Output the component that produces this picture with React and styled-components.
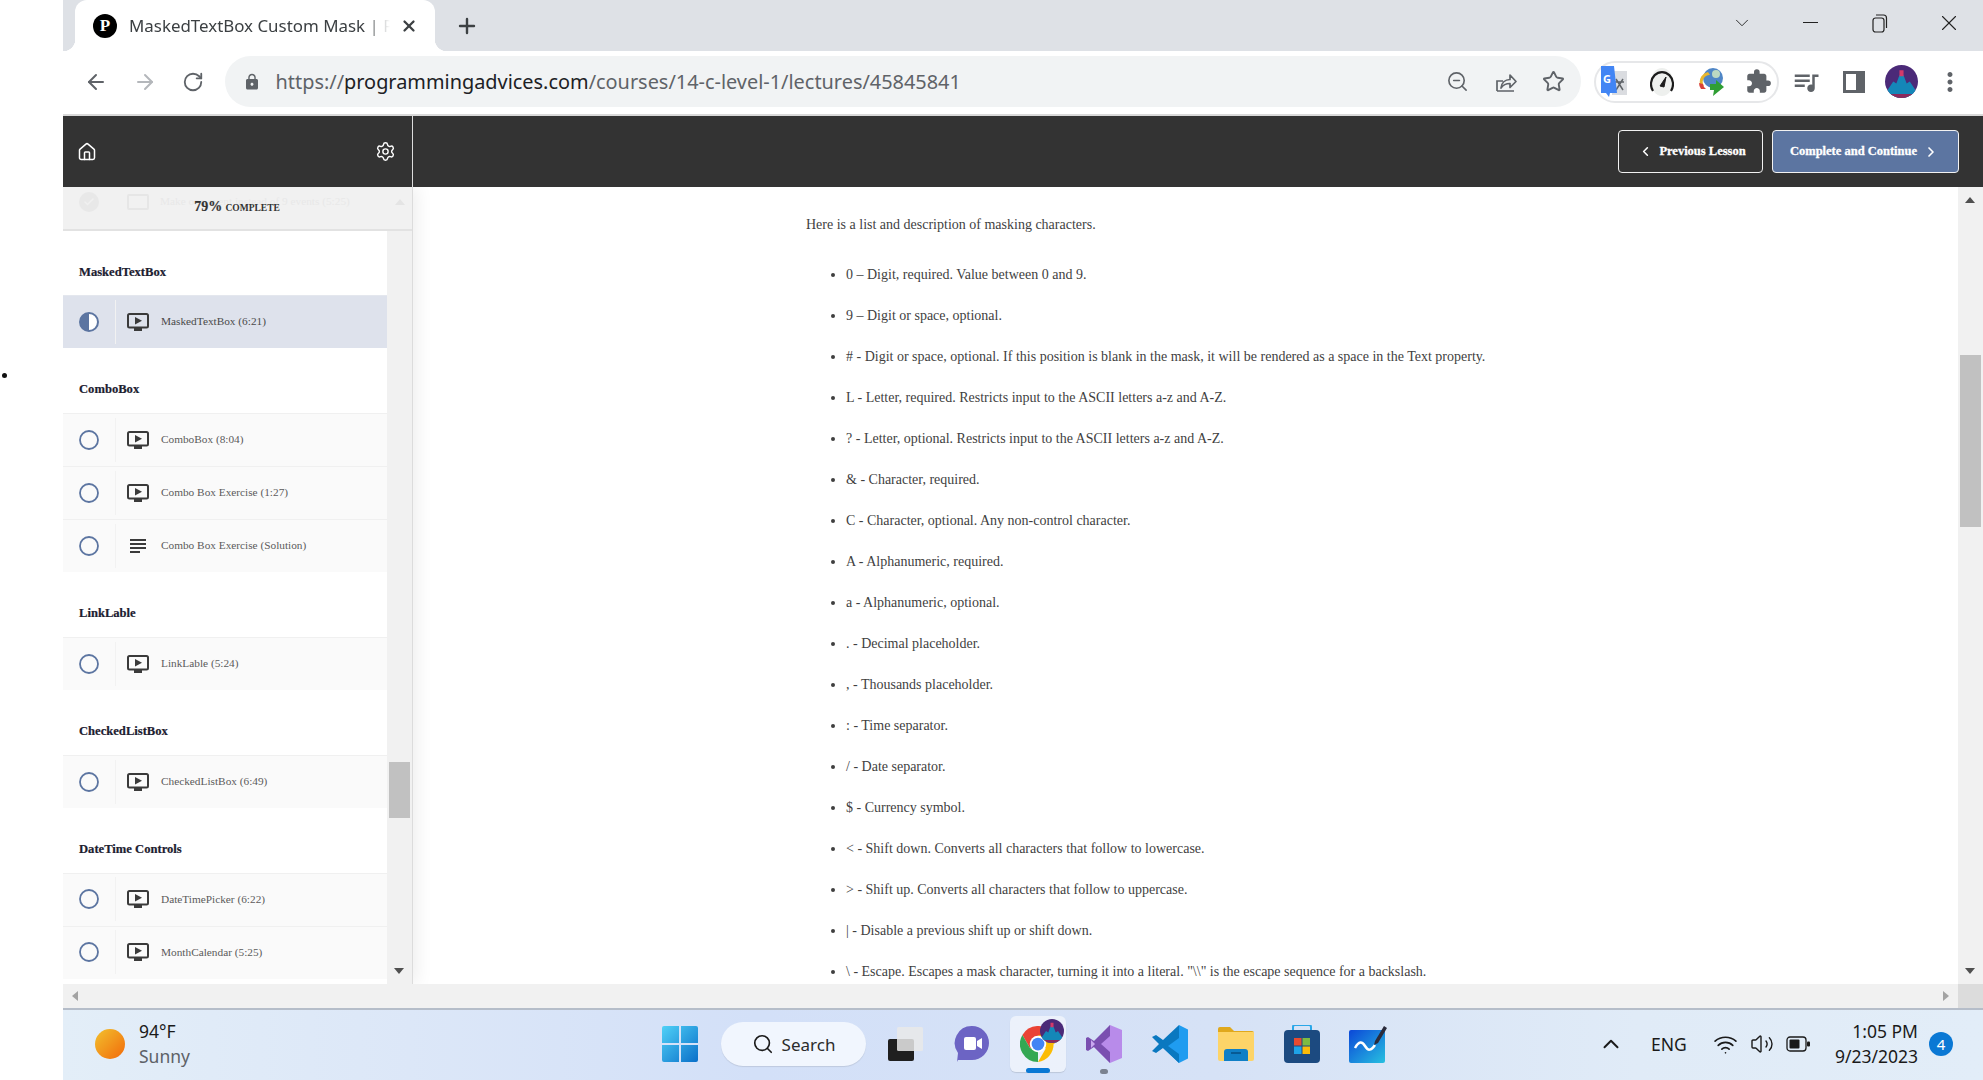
import React from 'react';
import styled, { createGlobalStyle } from 'styled-components';
import {
  ArrowLeft,
  ArrowRight,
  RotateCw,
  ZoomOut,
  Star,
  X,
  Plus,
  ChevronDown,
  ChevronUp,
  ChevronLeft,
  ChevronRight,
  House,
  Settings,
  Search,
  Wifi,
  Volume2,
  Check,
} from 'lucide-react';
import { MdLock, MdExtension, MdQueueMusic, MdMoreVert } from 'react-icons/md';

const SERIF = '"Liberation Serif", "Times New Roman", serif';
const UI = '"Noto Sans", "Open Sans", sans-serif';

const sections = [
  { title: 'MaskedTextBox', rows: [{ label: 'MaskedTextBox (6:21)', active: true }] },
  {
    title: 'ComboBox',
    rows: [
      { label: 'ComboBox (8:04)' },
      { label: 'Combo Box Exercise (1:27)' },
      { label: 'Combo Box Exercise (Solution)', text: true },
    ],
  },
  { title: 'LinkLable', rows: [{ label: 'LinkLable (5:24)' }] },
  { title: 'CheckedListBox', rows: [{ label: 'CheckedListBox (6:49)' }] },
  {
    title: 'DateTime Controls',
    rows: [{ label: 'DateTimePicker (6:22)' }, { label: 'MonthCalendar (5:25)' }],
  },
];

const maskChars = [
  '0 – Digit, required. Value between 0 and 9.',
  '9 – Digit or space, optional.',
  '# - Digit or space, optional. If this position is blank in the mask, it will be rendered as a space in the Text property.',
  'L - Letter, required. Restricts input to the ASCII letters a-z and A-Z.',
  '? - Letter, optional. Restricts input to the ASCII letters a-z and A-Z.',
  '& - Character, required.',
  'C - Character, optional. Any non-control character.',
  'A - Alphanumeric, required.',
  'a - Alphanumeric, optional.',
  '. - Decimal placeholder.',
  ', - Thousands placeholder.',
  ': - Time separator.',
  '/ - Date separator.',
  '$ - Currency symbol.',
  '< - Shift down. Converts all characters that follow to lowercase.',
  '> - Shift up. Converts all characters that follow to uppercase.',
  '| - Disable a previous shift up or shift down.',
  '\\ - Escape. Escapes a mask character, turning it into a literal. "\\\\" is the escape sequence for a backslash.',
];

//Small drawings
const TvIcon = () => (
  <svg width="22" height="18" viewBox="0 0 22 18">
    <rect x="1" y="1" width="20" height="13.5" rx="1.5" fill="none" stroke="#3a3a3a" strokeWidth="2" />
    <path d="M8 4 L15 7.8 L8 11.5 Z" fill="#3a3a3a" />
    <rect x="7" y="15" width="8" height="3" fill="#3a3a3a" />
  </svg>
);

const TextIcon = () => (
  <svg width="22" height="18" viewBox="0 0 22 18">
    <path d="M3 3h16M3 7h16M3 11h16M3 15h10" stroke="#3a3a3a" strokeWidth="1.8" />
  </svg>
);

const HalfCircle = () => (
  <svg width="20" height="20" viewBox="0 0 20 20">
    <circle cx="10" cy="10" r="9" fill="#fff" stroke="#5c75a1" strokeWidth="2" />
    <path d="M10 1 A9 9 0 0 0 10 19 Z" fill="#5c75a1" />
  </svg>
);

const EmptyCircle = () => (
  <svg width="20" height="20" viewBox="0 0 20 20">
    <circle cx="10" cy="10" r="9" fill="none" stroke="#5c75a1" strokeWidth="1.8" />
  </svg>
);

const ShareIcon = () => (
  <svg width="24" height="24" viewBox="0 0 24 24" fill="none" stroke="#5f6368" strokeWidth="1.7">
    <path d="M3 21h17M3 21V11h6" />
    <path d="M7 18c.5-5 4-8.500 9-8.500V5l6 6.500-6 6V13.500c-4 0-7 1.500-9 4.500Z" strokeLinejoin="round" />
  </svg>
);

const SidePanelIcon = () => (
  <svg width="22" height="22" viewBox="0 0 22 22">
    <path d="M0 0h22v22H0Z M3 3v16h10V3Z" fill="#5f6368" fillRule="evenodd" />
  </svg>
);

const RestoreIcon = () => (
  <svg width="16" height="20" viewBox="0 0 16 20" fill="none" stroke="#222" strokeWidth="1.2">
    <rect x="1" y="5" width="11" height="14" rx="2.500" />
    <path d="M4 2h7.500A3 3 0 0 1 14.500 5v10" />
  </svg>
);

const TranslateIcon = () => (
  <svg width="26" height="32" viewBox="0 0 26 32">
    <rect x="11" y="5" width="15" height="24" fill="#dadce0" />
    <path d="M15 13l7 11M22 13l-7 11M14 16h9" stroke="#5f6368" strokeWidth="1.500" />
    <path d="M0 0h13l3 27h-7l-1 4-3-4H0Z" fill="#4285f4" />
    <text x="6" y="17" fontFamily={UI} fontSize="11" fontWeight="700" fill="#fff" textAnchor="middle">G</text>
  </svg>
);

const SpeedIcon = () => (
  <svg width="24" height="30" viewBox="0 0 24 30">
    <ellipse cx="12" cy="15" rx="11" ry="14" fill="#eef0ee" />
    <path d="M3 24A11 12 0 1 1 21 24" fill="none" stroke="#1c1c1c" strokeWidth="2.200" />
    <path d="M10 19l6-9-2 10Z" fill="#1c1c1c" stroke="#1c1c1c" />
  </svg>
);

const IdmIcon = () => (
  <svg width="26" height="32" viewBox="0 0 26 32">
    <circle cx="15" cy="12" r="10" fill="#4f86c6" />
    <circle cx="18" cy="8" r="4" fill="#bcd9c2" />
    <path d="M2 18A10 10 0 0 1 10 6l2 3a7 7 0 0 0-6 11Z" fill="#e8b62d" />
    <path d="M3 23A10 10 0 0 1 1 17l4 1a7 7 0 0 0 3 5Z" fill="#d9413a" />
    <path d="M12 18h6v-4l8 7-11 9 1-6h-4Z" fill="#2f9e34" />
  </svg>
);

const AvatarArt = ({ size }) => (
  <svg width={size} height={size} viewBox="0 0 32 32">
    <clipPath id={`avatarClip${size}`}>
      <circle cx="16" cy="16" r="16" />
    </clipPath>
    <g clipPath={`url(#avatarClip${size})`}>
      <rect width="32" height="32" fill="#4b2a78" />
      <path d="M2 25L8 16l3 2 3-8h4l3 8 3-2 6 9v7H2Z" fill="#1487b8" />
      <path d="M14 5h4v6h-4Z" fill="#d43a6a" />
      <path d="M0 28h32v4H0Z" fill="#8c2a5c" />
    </g>
  </svg>
);

const WindowsLogo = () => (
  <svg width="36" height="36" viewBox="0 0 36 36">
    <defs>
      <linearGradient id="winBlue" x1="0" y1="0" x2="1" y2="1">
        <stop offset="0" stopColor="#4fd1f7" />
        <stop offset="1" stopColor="#0a6fc9" />
      </linearGradient>
    </defs>
    <path d="M0 2a2 2 0 0 1 2-2h15v17H0ZM19 0h15a2 2 0 0 1 2 2v15H19ZM0 19h17v17H2a2 2 0 0 1-2-2ZM19 19h17v15a2 2 0 0 1-2 2H19Z" fill="url(#winBlue)" />
  </svg>
);

const TaskViewIcon = () => (
  <svg width="38" height="36" viewBox="0 0 38 36">
    <rect x="1" y="13" width="26" height="22" rx="2" fill="#1f1f1f" />
    <rect x="10" y="1" width="26" height="24" rx="1.500" fill="#e9e9e9" fillOpacity="0.85" />
  </svg>
);

const ChatIcon = () => (
  <svg width="36" height="38" viewBox="0 0 36 38">
    <path d="M18 1a17 17 0 0 1 0 34H4l-1 2 1-9A17 17 0 0 1 18 1Z" fill="#6c64c4" />
    <rect x="10" y="12" width="12" height="13" rx="2" fill="#fff" />
    <path d="M23 16l5-3v11l-5-3Z" fill="#fff" />
  </svg>
);

const ChromeLogo = () => (
  <svg width="36" height="36" viewBox="0 0 48 48">
    <path d="M24 24L44.800 12A24 24 0 0 0 3.200 12L13.600 30Z" fill="#ea4335" />
    <path d="M24 24L13.600 30 3.200 12A24 24 0 0 0 24 48Z" fill="#34a853" />
    <path d="M24 24H44.800A24 24 0 0 1 24 48L34.400 30Z" fill="#fbbc04" />
    <path d="M24 12H44.800A24 24 0 0 1 46 24L34 24Z" fill="#fbbc04" />
    <circle cx="24" cy="24" r="11" fill="#fff" />
    <circle cx="24" cy="24" r="8.500" fill="#4285f4" />
  </svg>
);

const StudioLogo = () => (
  <svg width="36" height="38" viewBox="0 0 36 38">
    <path d="M24 0l12 5v28l-12 5L8 22Z" fill="#b88bea" />
    <path d="M24 0L8 16 2 12 0 13v12l2 1 6-4 16 16V27L15 19l9-8Z" fill="#7a4fb0" />
    <path d="M5 15v8l4-4Z" fill="#c9a8ef" />
  </svg>
);

const CodeLogo = () => (
  <svg width="36" height="38" viewBox="0 0 36 38">
    <path d="M27 0l9 4.500v29L27 38 9 21l18-14Z" fill="#1f9cf0" />
    <path d="M27 0L11 15 4 10 0 12l7 7-7 7 4 2 7-5 16 15 0-9-11-8 11-8Z" fill="#0a78c0" />
  </svg>
);

const FolderLogo = () => (
  <svg width="36" height="34" viewBox="0 0 36 34">
    <path d="M0 2a2 2 0 0 1 2-2h10l4 4h18a2 2 0 0 1 2 2v4H0Z" fill="#e0a81c" />
    <path d="M0 5h36v27a2 2 0 0 1-2 2H2a2 2 0 0 1-2-2Z" fill="#fdd468" />
    <path d="M6 34V25a3 3 0 0 1 3-3h18a3 3 0 0 1 3 3v9Z" fill="#0f7fc6" />
    <rect x="13" y="25" width="10" height="2" fill="#075a94" />
  </svg>
);

const StoreLogo = () => (
  <svg width="36" height="38" viewBox="0 0 36 38">
    <path d="M9 6V2a2 2 0 0 1 2-2h14a2 2 0 0 1 2 2v4" fill="none" stroke="#2aa7e8" strokeWidth="2" />
    <rect x="0" y="5" width="36" height="33" rx="4" fill="#1c4a80" />
    <rect x="10" y="13" width="7.500" height="7.500" fill="#e94b30" />
    <rect x="18.500" y="13" width="7.500" height="7.500" fill="#7dbb42" />
    <rect x="10" y="21.500" width="7.500" height="7.500" fill="#1fa3e8" />
    <rect x="18.500" y="21.500" width="7.500" height="7.500" fill="#fbbc09" />
  </svg>
);

const WhiteboardLogo = () => (
  <svg width="38" height="38" viewBox="0 0 38 38">
    <defs>
      <linearGradient id="boardBlue" x1="0" y1="0" x2="1" y2="1">
        <stop offset="0" stopColor="#0b47d8" />
        <stop offset="1" stopColor="#27c0e0" />
      </linearGradient>
    </defs>
    <rect x="0" y="5" width="36" height="33" rx="2" fill="url(#boardBlue)" />
    <path d="M6 23c4-7 7-7 10-2s6 5 10-1" fill="none" stroke="#fff" strokeWidth="2.500" />
    <path d="M26 16L35 1l3 2-9 15-4 2Z" fill="#2b2b3a" />
  </svg>
);

const BatteryIcon = () => (
  <svg width="24" height="16" viewBox="0 0 24 16">
    <rect x="1" y="1" width="19" height="14" rx="3" fill="none" stroke="#1a1a1a" strokeWidth="1.300" />
    <rect x="3.500" y="3.500" width="10" height="9" rx="1" fill="#1a1a1a" />
    <rect x="21" y="5.500" width="3" height="5" rx="1" fill="#1a1a1a" />
  </svg>
);

const App = () => {
  return (
    <Page>
      <GlobalStyle />
      <LeftStrip>
        <StrayDot />
      </LeftStrip>
      <BrowserWindow>
        <TabStrip>
          <Tab>
            <Favicon>P</Favicon>
            <TabTitle>MaskedTextBox Custom Mask | Programming</TabTitle>
            <X size={18} color="#3c4043" strokeWidth={3} />
          </Tab>
          <NewTab>
            <Plus size={24} color="#3c4043" strokeWidth={2.4} />
          </NewTab>
          <WindowControls>
            <WindowButton $width={68}>
              <ChevronDown size={22} color="#222" strokeWidth={1} />
            </WindowButton>
            <WindowButton $width={69}>
              <MinusLine />
            </WindowButton>
            <WindowButton $width={69}>
              <RestoreIcon />
            </WindowButton>
            <WindowButton $width={69}>
              <X size={26} color="#222" strokeWidth={1} />
            </WindowButton>
          </WindowControls>
        </TabStrip>

        <Toolbar>
          <NavButton>
            <ArrowLeft size={24} color="#5f6368" strokeWidth={2} />
          </NavButton>
          <NavButton>
            <ArrowRight size={24} color="#b4b7bb" strokeWidth={2} />
          </NavButton>
          <NavButton>
            <RotateCw size={22} color="#5f6368" strokeWidth={2} />
          </NavButton>
          <Omnibox>
            <MdLock size={18} color="#5f6368" />
            <Url>
              https://<UrlHost>programmingadvices.com</UrlHost>/courses/14-c-level-1/lectures/45845841
            </Url>
            <OmniAction>
              <ZoomOut size={23} color="#5f6368" strokeWidth={1.7} />
            </OmniAction>
            <OmniAction>
              <ShareIcon />
            </OmniAction>
            <OmniAction>
              <Star size={23} color="#5f6368" strokeWidth={2} />
            </OmniAction>
          </Omnibox>
          <ExtensionPill>
            <ExtensionSlot>
              <TranslateIcon />
            </ExtensionSlot>
            <ExtensionSlot>
              <SpeedIcon />
            </ExtensionSlot>
            <ExtensionSlot>
              <IdmIcon />
            </ExtensionSlot>
            <ExtensionSlot>
              <MdExtension size={27} color="#5f6368" />
            </ExtensionSlot>
          </ExtensionPill>
          <ToolGroup>
            <ToolSlot>
              <MdQueueMusic size={30} color="#5f6368" />
            </ToolSlot>
            <ToolSlot>
              <SidePanelIcon />
            </ToolSlot>
            <ToolSlot>
              <AvatarArt size={33} />
            </ToolSlot>
            <ToolSlot>
              <MdMoreVert size={30} color="#5f6368" />
            </ToolSlot>
          </ToolGroup>
        </Toolbar>

        <CourseBar>
          <CourseBarLeft>
            <House size={20} color="#fff" strokeWidth={1.8} />
            <Settings size={21} color="#fff" strokeWidth={1.6} />
          </CourseBarLeft>
          <CourseActions>
            <LessonButton>
              <ChevronLeft size={15} strokeWidth={2.5} />
              Previous Lesson
            </LessonButton>
            <LessonButton $primary>
              Complete and Continue
              <ChevronRight size={16} strokeWidth={2.5} />
            </LessonButton>
          </CourseActions>
        </CourseBar>

        <Body>
          <Sidebar>
            <SidebarList>
              {sections.map((section) => (
                <section key={section.title}>
                  <SectionTitle>{section.title}</SectionTitle>
                  {section.rows.map((row) => (
                    <LessonRow key={row.label} $active={row.active}>
                      <Status>{row.active ? <HalfCircle /> : <EmptyCircle />}</Status>
                      <LessonIcon>{row.text ? <TextIcon /> : <TvIcon />}</LessonIcon>
                      <LessonLabel>{row.label}</LessonLabel>
                    </LessonRow>
                  ))}
                </section>
              ))}
            </SidebarList>
            <VScroll>
              <ScrollThumb $top={575} $height={56} />
              <ScrollArrow $down />
            </VScroll>
            <ProgressPanel>
              <GhostRow>
                <GhostCheck>
                  <Check size={12} color="#f0f0f0" strokeWidth={3} />
                </GhostCheck>
                <GhostTv />
                <GhostLabel>Make one event instead of 9 events (5:25)</GhostLabel>
                <GhostArrow />
              </GhostRow>
              <ProgressLabel>
                <strong>79%</strong> <small>COMPLETE</small>
              </ProgressLabel>
            </ProgressPanel>
          </Sidebar>

          <Content>
            <Intro>Here is a list and description of masking characters.</Intro>
            <MaskList>
              {maskChars.map((item) => (
                <li key={item}>{item}</li>
              ))}
            </MaskList>
          </Content>
          <VScroll>
            <ScrollArrow />
            <ScrollThumb $top={168} $height={172} />
            <ScrollArrow $down />
          </VScroll>
        </Body>

        <HScroll>
          <ArrowCell $width={24}>
            <TriangleLeft />
          </ArrowCell>
          <ArrowCell $width={24} $end>
            <TriangleRight />
          </ArrowCell>
          <ScrollCorner />
        </HScroll>

        <Taskbar>
          <Weather>
            <Sun />
            <WeatherText>
              <span>94°F</span>
              <WeatherSub>Sunny</WeatherSub>
            </WeatherText>
          </Weather>
          <TaskIcons>
            <TaskCell>
              <WindowsLogo />
            </TaskCell>
            <SearchPill>
              <Search size={22} color="#1a1a1a" strokeWidth={1.8} />
              Search
            </SearchPill>
            <TaskCell $gap={7}>
              <TaskViewIcon />
            </TaskCell>
            <TaskCell>
              <ChatIcon />
            </TaskCell>
            <TaskCell $highlight>
              <ChromeLogo />
              <ChromeBadge>
                <AvatarArt size={24} />
              </ChromeBadge>
              <RunningBar />
            </TaskCell>
            <TaskCell>
              <StudioLogo />
              <RunningDot />
            </TaskCell>
            <TaskCell>
              <CodeLogo />
            </TaskCell>
            <TaskCell>
              <FolderLogo />
            </TaskCell>
            <TaskCell>
              <StoreLogo />
            </TaskCell>
            <TaskCell>
              <WhiteboardLogo />
            </TaskCell>
          </TaskIcons>
          <Tray>
            <ChevronUp size={26} color="#1a1a1a" strokeWidth={1.8} />
            <Lang>ENG</Lang>
            <TrayIcon>
              <Wifi size={25} color="#1a1a1a" strokeWidth={1.6} />
            </TrayIcon>
            <TrayIcon>
              <Volume2 size={24} color="#1a1a1a" strokeWidth={1.4} />
            </TrayIcon>
            <TrayIcon>
              <BatteryIcon />
            </TrayIcon>
            <Clock>
              <span>1:05 PM</span>
              <span>9/23/2023</span>
            </Clock>
            <NotifyBadge>4</NotifyBadge>
          </Tray>
        </Taskbar>
      </BrowserWindow>
    </Page>
  );
};

const GlobalStyle = createGlobalStyle`
  html, body {
    margin: 0;
    padding: 0;
    background: #fff;
    overflow: hidden;
  }
  * {
    box-sizing: border-box;
  }
`;

const Page = styled.div`
  display: flex;
  width: 1983px;
  height: 1080px;
  overflow: hidden;
  background: #fff;
`;

const LeftStrip = styled.div`
  width: 63px;
  flex: none;
  padding: 373px 0 0 2px;
`;

const StrayDot = styled.div`
  width: 5px;
  height: 5px;
  border-radius: 50%;
  background: #111;
`;

const BrowserWindow = styled.div`
  flex: 1;
  min-width: 0;
  display: flex;
  flex-direction: column;
`;

const TabStrip = styled.div`
  height: 51px;
  flex: none;
  display: flex;
  align-items: flex-end;
  background: #dee1e6;
  padding-left: 12px;
`;

const Tab = styled.div`
  position: relative;
  width: 360px;
  height: 51px;
  display: flex;
  align-items: center;
  padding: 0 17px 0 18px;
  background: #fff;
  border-radius: 12px 12px 0 0;
  &::before,
  &::after {
    content: '';
    position: absolute;
    bottom: 0;
    width: 12px;
    height: 12px;
  }
  &::before {
    left: -12px;
    background: radial-gradient(circle at 0 0, #dee1e6 12px, #fff 12.5px);
  }
  &::after {
    right: -12px;
    background: radial-gradient(circle at 100% 0, #dee1e6 12px, #fff 12.5px);
  }
`;

const Favicon = styled.div`
  width: 24px;
  height: 24px;
  flex: none;
  border-radius: 50%;
  background: #000;
  color: #fff;
  font: 700 17px/24px ${SERIF};
  text-align: center;
`;

const TabTitle = styled.div`
  flex: 1;
  min-width: 0;
  margin: 0 10px 0 12px;
  font: 400 16.900px/24px ${UI};
  color: #3c4043;
  white-space: nowrap;
  overflow: hidden;
  -webkit-mask-image: linear-gradient(90deg, #000 90%, transparent 100%);
  mask-image: linear-gradient(90deg, #000 90%, transparent 100%);
`;

const NewTab = styled.div`
  width: 64px;
  height: 51px;
  display: flex;
  align-items: center;
  justify-content: center;
`;

const WindowControls = styled.div`
  margin-left: auto;
  height: 45px;
  align-self: flex-start;
  display: flex;
`;

const WindowButton = styled.div`
  width: ${(p) => p.$width}px;
  display: flex;
  align-items: center;
  justify-content: center;
`;

const MinusLine = styled.div`
  width: 15px;
  height: 1px;
  background: #222;
`;

const Toolbar = styled.div`
  height: 65px;
  flex: none;
  display: flex;
  align-items: center;
  padding: 0 6px 2px 9px;
  background: #fff;
  border-bottom: 2px solid #d9d9d9;
`;

const NavButton = styled.div`
  width: 48.500px;
  flex: none;
  display: flex;
  justify-content: center;
`;

const Omnibox = styled.div`
  width: 1356px;
  height: 51px;
  margin-left: 7px;
  flex: none;
  display: flex;
  align-items: center;
  padding: 0 3px 0 18px;
  border-radius: 26px;
  background: #f1f3f4;
`;

const Url = styled.div`
  flex: 1;
  margin-left: 15px;
  font: 400 19.900px/26px ${UI};
  color: #5f6368;
  white-space: nowrap;
`;

const UrlHost = styled.span`
  color: #202124;
`;

const OmniAction = styled.div`
  width: 48px;
  flex: none;
  display: flex;
  justify-content: center;
`;

const ExtensionPill = styled.div`
  width: 185px;
  height: 42px;
  margin-left: 13px;
  flex: none;
  display: flex;
  align-items: center;
  border: 2px solid #e6e7e9;
  border-radius: 21px;
`;

const ExtensionSlot = styled.div`
  width: 48px;
  flex: none;
  display: flex;
  justify-content: center;
  &:first-child {
    width: 36px;
  }
  &:nth-child(2) {
    width: 60px;
  }
  &:nth-child(3) {
    width: 38px;
  }
  &:last-child {
    width: 58px;
  }
`;

const ToolGroup = styled.div`
  display: flex;
  margin-left: 3px;
`;

const ToolSlot = styled.div`
  width: 48px;
  flex: none;
  display: flex;
  align-items: center;
  justify-content: center;
`;

const CourseBar = styled.div`
  height: 71px;
  flex: none;
  display: flex;
  align-items: center;
  justify-content: space-between;
  background: #333;
`;

const CourseBarLeft = styled.div`
  width: 350px;
  height: 100%;
  display: flex;
  align-items: center;
  justify-content: space-between;
  padding: 0 16px 0 14px;
  border-right: 1px solid #ddd;
`;

const CourseActions = styled.div`
  display: flex;
  gap: 9px;
  padding-right: 24px;
`;

const LessonButton = styled.div`
  height: 43px;
  display: flex;
  align-items: center;
  justify-content: center;
  gap: 6px;
  padding: ${(p) => (p.$primary ? '0 16px 0 14px' : '0 16px 0 19px')};
  min-width: ${(p) => (p.$primary ? 187 : 145)}px;
  border: 1px solid #f2f2f2;
  border-radius: 4px;
  background: ${(p) => (p.$primary ? '#5c75a1' : 'transparent')};
  color: #fff;
  font: 700 12.500px/1 ${SERIF};
  -webkit-text-stroke: 0.3px #fff;
  white-space: nowrap;
`;

const Body = styled.div`
  flex: 1;
  min-height: 0;
  display: flex;
  overflow: hidden;
`;

const Sidebar = styled.div`
  position: relative;
  z-index: 1;
  width: 350px;
  flex: none;
  display: flex;
  border-right: 1px solid #dcdcdc;
  box-shadow: 4px 0 16px rgba(0, 0, 0, 0.07);
  background: #fff;
`;

const SidebarList = styled.div`
  flex: 1;
  min-width: 0;
  padding-top: 43.500px;
  overflow: hidden;
  background: #fff;
`;

const SectionTitle = styled.div`
  height: 64.900px;
  padding: 30px 0 0 16px;
  font: 700 12.600px/22px ${SERIF};
  color: #1c2030;
  -webkit-text-stroke: 0.2px #1c2030;
`;

const LessonRow = styled.div`
  height: 53px;
  display: flex;
  align-items: center;
  padding-bottom: 1px;
  background: ${(p) => (p.$active ? '#dee2ec' : '#fafafa')};
  border-top: 1px solid ${(p) => (p.$active ? '#e4e7ee' : '#f0f0f0')};
  color: ${(p) => (p.$active ? '#4a4a4a' : '#5a5a5a')};
`;

const Status = styled.div`
  width: 53px;
  height: 44px;
  flex: none;
  display: flex;
  align-items: center;
  padding-left: 16px;
  border-right: 1px solid #f2f2f2;
`;

const LessonIcon = styled.div`
  flex: none;
  margin-left: 11px;
  display: flex;
`;

const LessonLabel = styled.div`
  margin-left: 12px;
  font: 400 11.300px/1 ${SERIF};
  white-space: nowrap;
`;

const ProgressPanel = styled.div`
  position: absolute;
  top: 0;
  left: 0;
  right: 0;
  height: 44px;
  background: #f1f1f1;
  border-bottom: 2px solid #e2e2e2;
`;

const GhostRow = styled.div`
  display: flex;
  align-items: center;
  height: 30px;
  padding: 0 7px 0 16px;
`;

const GhostCheck = styled.div`
  width: 20px;
  height: 20px;
  border-radius: 50%;
  background: #e8e8e8;
  display: flex;
  align-items: center;
  justify-content: center;
`;

const GhostTv = styled.div`
  width: 22px;
  height: 16px;
  margin-left: 28px;
  border: 2px solid #e6e6e6;
  border-radius: 2px;
`;

const GhostLabel = styled.div`
  margin-left: 11px;
  font: 400 11.300px/1 ${SERIF};
  color: #e8e8e8;
  white-space: nowrap;
`;

const GhostArrow = styled.div`
  margin-left: auto;
  border-style: solid;
  border-width: 0 5.500px 6px;
  border-color: transparent transparent #e4e4e4;
`;

const ProgressLabel = styled.div`
  position: absolute;
  top: 10px;
  left: 0;
  right: 0;
  text-align: center;
  color: #333;
  font: 400 13px/20px ${SERIF};
  padding-right: 1px;
  strong {
    font-size: 14px;
    -webkit-text-stroke: 0.2px #333;
  }
  small {
    font-size: 9.500px;
    font-weight: 700;
  }
`;

const VScroll = styled.div`
  position: relative;
  width: 25px;
  flex: none;
  background: #f1f1f1;
`;

const ScrollThumb = styled.div`
  position: absolute;
  top: ${(p) => p.$top}px;
  left: 2px;
  right: 2px;
  height: ${(p) => p.$height}px;
  background: #c1c1c1;
`;

const ScrollArrow = styled.div`
  position: absolute;
  left: 7px;
  ${(p) =>
    p.$down
      ? `
    bottom: 10px;
    border-width: 6px 5.5px 0;
    border-color: #505050 transparent transparent;
  `
      : `
    top: 10px;
    border-width: 0 5.5px 6px;
    border-color: transparent transparent #505050;
  `}
  border-style: solid;
`;

const Content = styled.div`
  flex: 1;
  min-width: 0;
  padding: 28px 0 0 393px;
  background: #fff;
  overflow: hidden;
  color: #3f3f3f;
  font: 400 14px/20px ${SERIF};
`;

const Intro = styled.p`
  margin: 0 0 19px;
`;

const MaskList = styled.ul`
  margin: 0;
  padding: 0 0 0 40px;
  li {
    line-height: 41px;
    height: 41px;
    white-space: nowrap;
  }
`;

const HScroll = styled.div`
  height: 24px;
  flex: none;
  display: flex;
  background: #f1f1f1;
`;

const ArrowCell = styled.div`
  width: ${(p) => p.$width}px;
  display: flex;
  align-items: center;
  justify-content: center;
  margin-left: ${(p) => (p.$end ? 'auto' : 0)};
`;

const TriangleLeft = styled.div`
  border-style: solid;
  border-width: 5.500px 6px 5.500px 0;
  border-color: transparent #a3a3a3 transparent transparent;
`;

const TriangleRight = styled.div`
  border-style: solid;
  border-width: 5.500px 0 5.500px 6px;
  border-color: transparent transparent transparent #a3a3a3;
`;

const ScrollCorner = styled.div`
  width: 25px;
  background: #dcdcdc;
`;

const Taskbar = styled.div`
  height: 72px;
  flex: none;
  display: grid;
  grid-template-columns: 584px auto 1fr;
  align-items: center;
  padding-bottom: 2px;
  border-top: 2px solid #b5bdc9;
  background: linear-gradient(90deg, #e3eef8 0%, #dce7f8 18%, #d3e0f8 36%, #d6e2f6 60%, #e0ebf7 82%, #e2edf8 100%);
  font-family: ${UI};
  color: #1a1a1a;
`;

const Weather = styled.div`
  display: flex;
  align-items: center;
  padding-left: 32px;
  gap: 14px;
`;

const Sun = styled.div`
  width: 30px;
  height: 30px;
  border-radius: 50%;
  background: linear-gradient(135deg, #f2c12e, #f26a0a);
`;

const WeatherText = styled.div`
  display: flex;
  flex-direction: column;
  font-size: 17.500px;
  line-height: 25px;
`;

const WeatherSub = styled.span`
  color: #5d6167;
`;

const TaskIcons = styled.div`
  display: flex;
  align-items: center;
`;

const TaskCell = styled.div`
  position: relative;
  width: 66px;
  height: 56px;
  margin-left: ${(p) => p.$gap || 0}px;
  display: flex;
  align-items: center;
  justify-content: center;
  border-radius: 6px;
  ${(p) =>
    p.$highlight &&
    `
    width: 56px;
    margin: 0 5px;
    background: rgba(255, 255, 255, 0.55);
    box-shadow: 0 1px 1px rgba(0, 0, 0, 0.12);
  `}
`;

const ChromeBadge = styled.div`
  position: absolute;
  top: 3px;
  right: 2px;
  height: 24px;
  width: 24px;
  display: flex;
`;

const RunningBar = styled.div`
  position: absolute;
  bottom: -1px;
  left: 16px;
  width: 24px;
  height: 5px;
  border-radius: 3px;
  background: #0a78d4;
`;

const RunningDot = styled.div`
  position: absolute;
  bottom: -2px;
  left: 29px;
  width: 8px;
  height: 5px;
  border-radius: 3px;
  background: #7b8290;
`;

const SearchPill = styled.div`
  width: 145px;
  height: 44px;
  margin-left: 8px;
  display: flex;
  align-items: center;
  justify-content: center;
  gap: 8px;
  border-radius: 22px;
  background: #f1f6fe;
  box-shadow: 0 1px 1px rgba(0, 0, 0, 0.1);
  font-size: 17px;
  color: #2b2b2b;
`;

const Tray = styled.div`
  display: flex;
  align-items: center;
  justify-content: flex-end;
  padding-right: 30px;
`;

const Lang = styled.span`
  margin-left: 26.500px;
  width: 36px;
  font-size: 17.500px;
`;

const TrayIcon = styled.div`
  width: 36px;
  display: flex;
  justify-content: center;
  &:first-of-type {
    margin-left: 21px;
  }
`;

const Clock = styled.div`
  display: flex;
  flex-direction: column;
  align-items: flex-end;
  margin-left: 19px;
  font-size: 17.500px;
  line-height: 25px;
`;

const NotifyBadge = styled.div`
  width: 24px;
  height: 24px;
  margin-left: 11px;
  border-radius: 50%;
  background: #0a78d4;
  color: #fff;
  font-size: 15px;
  line-height: 24px;
  text-align: center;
`;

export default App;
